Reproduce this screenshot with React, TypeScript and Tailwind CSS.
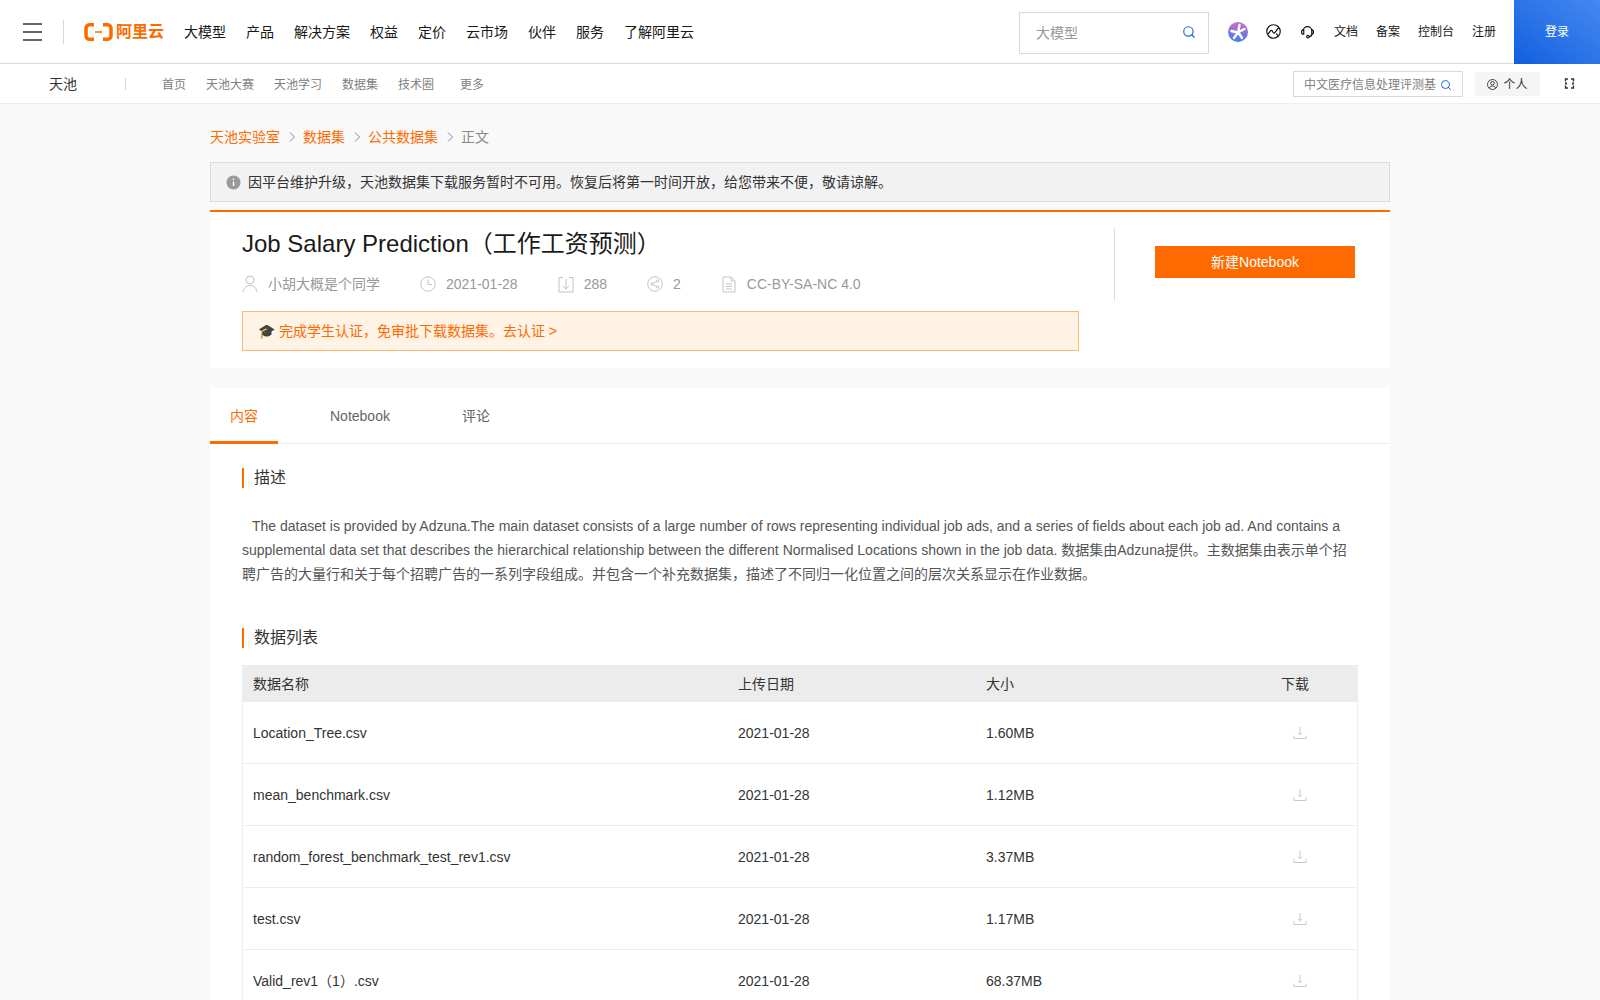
import { Search } from "lucide-react";

const font = { fontFamily: '"Liberation Sans", "Noto Sans CJK SC", sans-serif' };

const mainNav = ["大模型", "产品", "解决方案", "权益", "定价", "云市场", "伙伴", "服务", "了解阿里云"];
const files = [
  { name: "Location_Tree.csv", date: "2021-01-28", size: "1.60MB" },
  { name: "mean_benchmark.csv", date: "2021-01-28", size: "1.12MB" },
  { name: "random_forest_benchmark_test_rev1.csv", date: "2021-01-28", size: "3.37MB" },
  { name: "test.csv", date: "2021-01-28", size: "1.17MB" },
  { name: "Valid_rev1（1）.csv", date: "2021-01-28", size: "68.37MB" },
];

const Chevron = () => (
  <svg width="8" height="12" viewBox="0 0 8 12" fill="none" stroke="#888" strokeWidth="1" className="mx-[7.5px]">
    <path d="M2 1.500l4.500 4.500-4.500 4.500" />
  </svg>
);

const SectionTitle = ({ children }: { children: string }) => (
  <h3 className="border-l-2 border-[#ff6a00] pl-[10px] text-base leading-5 font-normal text-[#333]">{children}</h3>
);

const DownloadIcon = () => (
  <svg width="14" height="14" viewBox="0 0 14 14" fill="none" stroke="#c8c8c8" strokeWidth="1">
    <path d="M7 1v7.500M5 6.800l2 2 2-2M1 9.500v3h12v-3" />
  </svg>
);

export default function App() {
  return (
    <div className="h-screen overflow-hidden bg-[#f9f9f9]" style={font}>
      {/* Top bar */}
      <header className="flex h-16 items-center border-b border-[#d9d9d9] bg-white">
        <div className="ml-[23px] flex w-[19px] flex-col gap-[6px]">
          <span className="h-[2px] bg-[#666]" />
          <span className="h-[2px] bg-[#666]" />
          <span className="h-[2px] bg-[#666]" />
        </div>
        <span className="ml-[21px] h-6 w-px bg-[#d9d9d9]" />
        <div className="ml-5 flex w-[80px] items-center gap-[3px]">
          <svg width="29" height="18" viewBox="0 0 29 18" fill="none">
            <path d="M10 1.800H5.500a3.500 3.500 0 0 0-3.500 3.500v7.400a3.500 3.500 0 0 0 3.500 3.500H10M19 1.800h4.500a3.500 3.500 0 0 1 3.500 3.500v7.400a3.500 3.500 0 0 1-3.500 3.500H19" stroke="#ff6a00" strokeWidth="3.500" />
            <path d="M11 9h7" stroke="#ff6a00" strokeWidth="1.500" />
          </svg>
          <span className="text-base leading-none font-bold whitespace-nowrap text-[#ff6a00]">阿里云</span>
        </div>
        <nav className="ml-5 flex gap-5 text-sm text-[#181818]">
          {mainNav.map((item) => (
            <a key={item}>{item}</a>
          ))}
        </nav>
        <div className="mt-[2px] ml-auto flex h-[42px] w-[190px] items-center justify-between border border-[#d9d9d9] pr-3 pl-4 text-sm text-[#999]">
          大模型
          <Search size={14} color="#1a66e6" className="-mt-[2px]" />
        </div>
        <svg width="20" height="20" viewBox="0 0 20 20" className="ml-[19px]">
          <defs>
            <linearGradient id="spark" x1="0.5" y1="0" x2="0.5" y2="1">
              <stop offset="0" stopColor="#d06cc0" />
              <stop offset="1" stopColor="#3a80f2" />
            </linearGradient>
          </defs>
          <circle cx="10" cy="10" r="10" fill="url(#spark)" />
          <path d="M11.500 3l-1 5.500M3.500 9l6 1.500M16.500 7l-6 3M6 16l4-5.500M14 16l-3.500-5.500" stroke="#fff" strokeWidth="2.400" strokeLinecap="round" />
        </svg>
        <svg width="15" height="15" viewBox="0 0 14 14" fill="none" stroke="#111" strokeWidth="1.100" className="ml-[18px]">
          <circle cx="7" cy="7" r="6.300" />
          <path d="M1.500 9.500c1.500 0 1.800-3.500 3.500-3.500s1 2.500 2.500 2.500S9.500 5 12 3.500M9.500 9l1.800 1.800" />
        </svg>
        <svg width="15" height="15" viewBox="0 0 14 14" fill="none" stroke="#111" strokeWidth="1.100" className="ml-[19px]">
          <path d="M3 6.500a4 4 0 0 1 8 0M2.500 5.500h1v4h-1a1.500 1.500 0 0 1-1-1.400V6.900a1.500 1.500 0 0 1 1-1.400zM11 5.500h.5a1.500 1.500 0 0 1 1 1.400v1.200a1.500 1.500 0 0 1-1 1.400H11zM11 9.500c0 1.500-1 2.200-2.500 2.200" />
          <circle cx="7.400" cy="11.700" r="1.200" />
        </svg>
        <div className="ml-[19px] flex gap-[18px] text-xs text-[#181818]">
          <a>文档</a>
          <a>备案</a>
          <a>控制台</a>
          <a>注册</a>
        </div>
        <a className="ml-[18px] flex h-16 w-[86px] items-center justify-center bg-gradient-to-tr from-[#0f5fe0] to-[#4488f0] text-xs text-white">
          登录
        </a>
      </header>

      {/* Sub nav */}
      <div className="flex h-10 items-center border-b border-[#eeeeee] bg-white text-xs">
        <span className="ml-[49px] pt-[1px] text-sm text-[#333]">天池</span>
        <span className="ml-12 h-3 w-px bg-[#d9d9d9]" />
        <nav className="ml-9 flex gap-5 pt-[2px] text-[#808080]">
          <a>首页</a>
          <a>天池大赛</a>
          <a>天池学习</a>
          <a>数据集</a>
          <a>技术圈</a>
          <a className="ml-[6px]">更多</a>
        </nav>
        <div className="ml-auto flex h-[26px] w-[170px] items-center justify-between border border-[#d9d9d9] px-[10px] pt-[2px] text-[#808080]">
          <span className="whitespace-nowrap">中文医疗信息处理评测基</span>
          <Search size={12} color="#1a66e6" className="shrink-0" />
        </div>
        <div className="ml-3 flex h-6 w-[65px] items-center justify-center gap-[5px] bg-[#f5f5f5] pt-[2px] text-[#333]">
          <svg width="11" height="11" viewBox="0 0 11 11" fill="none" stroke="#333" strokeWidth="0.900">
            <circle cx="5.500" cy="5.500" r="5" />
            <circle cx="5.500" cy="4.300" r="1.800" />
            <path d="M2.300 9.200c.6-1.500 1.800-2.200 3.200-2.200s2.600.7 3.200 2.200" />
          </svg>
          个人
        </div>
        <svg width="11" height="11" viewBox="0 0 11 11" fill="none" stroke="#333" strokeWidth="1.400" className="mr-[25px] ml-[24px]">
          <path d="M4 1H1.500v2.500M7 1h2.500v2.500M4 10H1.500V7.500M7 10h2.500V7.500" />
          <path d="M1 5.500h2M8 5.500h2" strokeWidth="2" />
        </svg>
      </div>

      <main className="mx-auto w-[1180px]">
        {/* Breadcrumb */}
        <div className="flex h-[58px] items-center pt-2 text-sm text-[#ff6a00]">
          <a>天池实验室</a>
          <Chevron />
          <a>数据集</a>
          <Chevron />
          <a>公共数据集</a>
          <Chevron />
          <span className="text-[#888]">正文</span>
        </div>

        {/* Maintenance notice */}
        <div className="flex h-10 items-center gap-[7px] border border-[#dddddd] bg-[#f2f2f2] pl-[15px] text-sm text-[#333]">
          <svg width="15" height="15" viewBox="0 0 15 15" className="shrink-0">
            <circle cx="7.500" cy="7.500" r="7" fill="#999" />
            <path d="M7.500 6.500v4.500M7.500 3.600v1.500" stroke="#fff" strokeWidth="1.400" />
          </svg>
          因平台维护升级，天池数据集下载服务暂时不可用。恢复后将第一时间开放，给您带来不便，敬请谅解。
        </div>

        {/* Dataset head */}
        <section className="mt-2 flex h-[158px] border-t-2 border-[#ff6a00] bg-white">
          <div className="ml-8 w-[837px]">
            <h1 className="mt-[16px] text-2xl leading-8 font-normal text-[#1a1a1a]">Job Salary Prediction（工作工资预测）</h1>
            <div className="mt-[12px] flex h-6 items-center text-sm text-[#999]">
              <svg width="16" height="18" viewBox="0 0 16 18" fill="none" stroke="#c4c4c4" className="mr-[10px]">
                <circle cx="8" cy="5" r="4" />
                <path d="M1 17c.5-4 3-6.500 7-6.500s6.500 2.500 7 6.500" />
              </svg>
              小胡大概是个同学
              <svg width="16" height="16" viewBox="0 0 16 16" fill="none" stroke="#c4c4c4" className="mr-[10px] ml-10">
                <circle cx="8" cy="8" r="7.200" />
                <path d="M8 3.500V8.500H12" />
              </svg>
              2021-01-28
              <svg width="16" height="17" viewBox="0 0 16 17" fill="none" stroke="#c4c4c4" className="mr-[10px] ml-10">
                <path d="M5 1.500H1v14.500h14V1.500h-4M8 3v10M5 10l3 3 3-3" />
              </svg>
              288
              <svg width="16" height="16" viewBox="0 0 16 16" fill="none" stroke="#c4c4c4" className="mr-[10px] ml-10">
                <circle cx="8" cy="8" r="7.300" />
                <circle cx="5" cy="8" r="1.200" />
                <circle cx="10.500" cy="5" r="1.200" />
                <circle cx="10.500" cy="11" r="1.200" />
                <path d="M6 7.400l3.500-2M6 8.600l3.500 2" />
              </svg>
              2
              <svg width="14" height="17" viewBox="0 0 14 17" fill="none" stroke="#c4c4c4" className="mr-[11px] ml-[41px]">
                <path d="M1 1h8l4 4v11H1zM9 1v4h4M4 8h6M4 10.500h6M4 13h6" />
              </svg>
              CC-BY-SA-NC 4.0
            </div>
            <div className="mt-[15px] flex h-10 items-center border border-[#ffb870] bg-[#fff3e6] pl-[15px] text-sm text-[#ff6a00]">
              🎓 完成学生认证，免审批下载数据集。去认证 &gt;
            </div>
          </div>
          <div className="mt-4 ml-[35px] h-[73px] w-px bg-[#dddddd]" />
          <a className="mt-[34px] ml-10 flex h-8 w-[200px] items-center justify-center bg-[#ff6a00] text-sm text-white">
            新建Notebook
          </a>
        </section>

        {/* Content card */}
        <section className="mt-5 bg-white pb-10">
          <div className="flex h-14 border-b border-[#eeeeee] text-sm text-[#666]">
            <a className="-mb-px flex w-[68px] items-center justify-center border-b-[3px] border-[#ff6a00] pt-[3px] text-[#ff6a00]">内容</a>
            <a className="ml-[52px] flex items-center">Notebook</a>
            <a className="ml-[72px] flex items-center">评论</a>
          </div>
          <div className="px-8 pt-6">
            <SectionTitle>描述</SectionTitle>
            <p className="mt-[26px] text-sm leading-6 text-[#555] indent-[10px]">
              The dataset is provided by Adzuna.The main dataset consists of a large number of rows representing individual job ads, and a series of fields about each job ad. And contains a supplemental data set that describes the hierarchical relationship between the different Normalised Locations shown in the job data. 数据集由Adzuna提供。主数据集由表示单个招聘广告的大量行和关于每个招聘广告的一系列字段组成。并包含一个补充数据集，描述了不同归一化位置之间的层次关系显示在作业数据。
            </p>
            <div className="mt-[42px]">
              <SectionTitle>数据列表</SectionTitle>
            </div>
            <div className="mt-[17px] border-x border-[#eeeeee] text-sm text-[#333]">
              <div className="grid h-[37px] grid-cols-[485px_248px_295px_1fr] items-center bg-[#ececec] pl-[10px]">
                <span>数据名称</span>
                <span>上传日期</span>
                <span>大小</span>
                <span>下载</span>
              </div>
              {files.map((file) => (
                <div key={file.name} className="grid h-[62px] grid-cols-[485px_248px_295px_1fr] items-center border-b border-[#eeeeee] pl-[10px]">
                  <span>{file.name}</span>
                  <span>{file.date}</span>
                  <span>{file.size}</span>
                  <span className="pl-[12px]">
                    <DownloadIcon />
                  </span>
                </div>
              ))}
            </div>
          </div>
        </section>
      </main>
    </div>
  );
}
